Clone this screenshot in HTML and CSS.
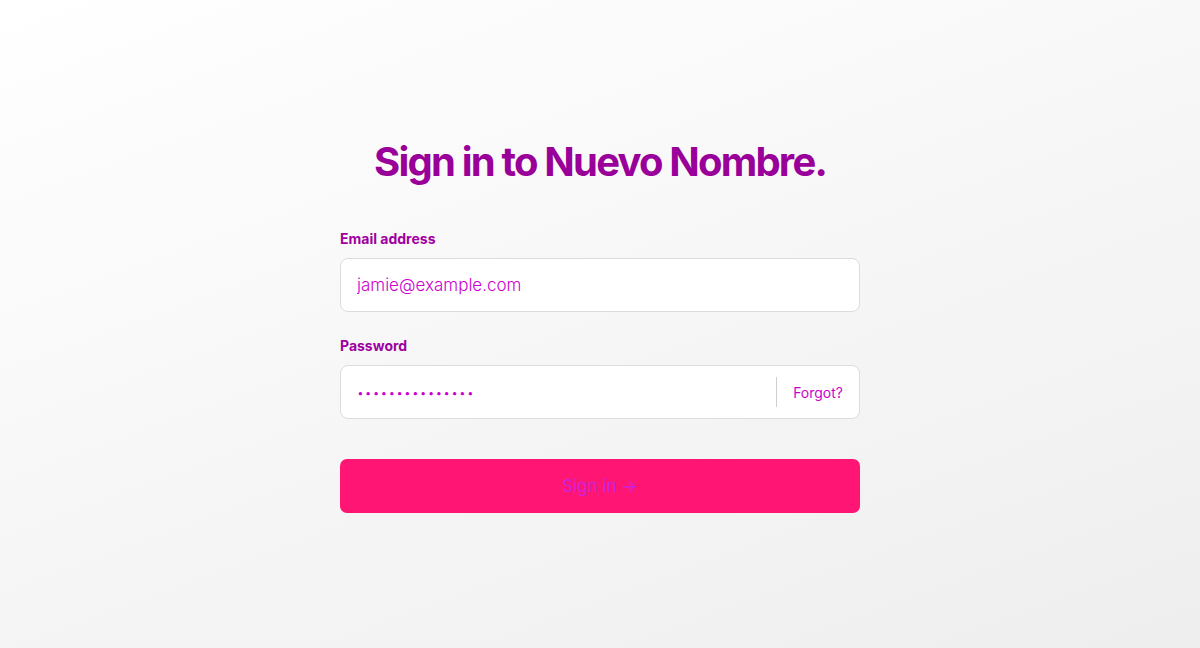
FILE: index.html
```html
<!DOCTYPE html>
<html lang="en">
<head>
<meta charset="utf-8">
<title>Sign in</title>
<link rel="stylesheet" href="styles.css">
</head>
<body>
<main class="page">
  <form class="card">
    <h1 class="title">Sign in to Nuevo Nombre.</h1>
    <div class="field">
      <label class="label" for="email">Email address</label>
      <div class="box">
        <input id="email" class="input" type="email" value="jamie@example.com">
      </div>
    </div>
    <div class="field">
      <label class="label" for="pw">Password</label>
      <div class="box">
        <input id="pw" class="input pw" type="password" value="correcthorse123">
        <span class="divider"></span>
        <a class="forgot" href="#">Forgot?</a>
      </div>
    </div>
    <button class="submit" type="button">Sign in →</button>
  </form>
</main>
</body>
</html>
```
FILE: styles.css
```css
* { box-sizing: border-box; }
html, body { margin: 0; height: 100%; }
body {
  font-family: Inter, "Noto Sans", sans-serif;
  background: linear-gradient(160deg, #ffffff 0%, #eeeeee 100%);
}
.page {
  min-height: 100%;
  display: flex;
  justify-content: center;
  padding-top: 137px;
}
.card {
  width: 520px;
  display: flex;
  flex-direction: column;
}
.title {
  margin: 0 0 43px;
  text-align: center;
  font-size: 40px;
  font-weight: 700;
  letter-spacing: -0.045em;
  line-height: 50px;
  color: #990099;
}
.field { display: flex; flex-direction: column; margin-bottom: 25px; }
.label {
  font-size: 14px;
  font-weight: 700;
  color: #a000a0;
  line-height: 18px;
  margin-bottom: 10px;
}
.box {
  height: 54px;
  background: #fff;
  border: 1px solid #dcdcdc;
  border-radius: 8px;
  display: flex;
  align-items: center;
  padding: 0 16px;
}
.input {
  flex: 1;
  border: 0;
  outline: 0;
  background: transparent;
  font-family: Inter, "Noto Sans", sans-serif;
  font-size: 17px;
  font-weight: 300;
  color: #cc00cc;
  padding: 0;
  min-width: 0;
}
.pw { font-size: 12px; letter-spacing: 1.1px; }
.divider {
  width: 1px;
  height: 30px;
  background: #cfcfcf;
  margin: 0 16px 0 0;
}
.forgot {
  font-size: 14px;
  color: #cc00cc;
  text-decoration: none;
}
.submit {
  margin-top: 15px;
  height: 54px;
  border: 0;
  border-radius: 7px;
  background: #ff1574;
  color: #cc22dd;
  font-family: Inter, "Noto Sans", sans-serif;
  font-size: 17px;
  font-weight: 400;
}
```
